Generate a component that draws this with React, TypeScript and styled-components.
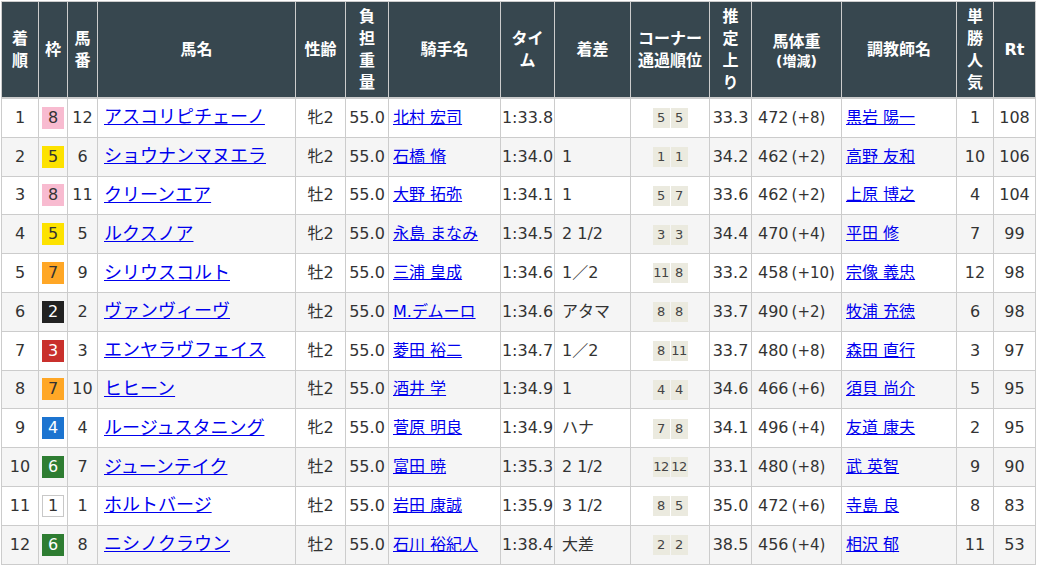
import React from "react";
import styled, { createGlobalStyle, css } from "styled-components";

const GlobalStyle = createGlobalStyle`
  html, body { margin: 0; padding: 0; background: #fff; }
  body {
    font-family: "DejaVu Sans", "Noto Sans CJK JP", sans-serif;
    color: #333;
  }
`;

const Wrapper = styled.div`
  padding: 1px 0 0 1px;
`;

const Table = styled.table`
  border-collapse: collapse;
  table-layout: fixed;
  width: 1035px;
  font-size: 16px;
  border: 1px solid #ccc;
`;

const HeadCell = styled.th`
  background: #37474f;
  color: #fff;
  font-weight: bold;
  font-size: 16px;
  line-height: 22px;
  height: 95px;
  padding: 0;
  text-align: center;
  vertical-align: middle;
  border: 1px solid #ccc;
  border-bottom: 2px solid #ccc;
`;

const SmallHead = styled.span`
  display: block;
  font-size: 14px;
  line-height: 16px;
`;

const Row = styled.tr<{ $alt: boolean }>`
  background: ${(p) => (p.$alt ? "#f5f5f5" : "#fff")};
`;

type Align = "left" | "center";

const Cell = styled.td<{ $align?: Align; $pl?: number }>`
  height: 37.8px;
  padding: 0 ${(p) => (p.$align === "left" ? "2px" : "0")} 0
    ${(p) => (p.$align === "left" ? `${p.$pl ?? 4}px` : "0")};
  text-align: ${(p) => p.$align ?? "center"};
  vertical-align: middle;
  border: 1px solid #ccc;
  line-height: 20px;
  white-space: nowrap;
  overflow: hidden;
`;

const Link = styled.a<{ $big?: boolean }>`
  color: #0000ee;
  text-decoration: underline;
  ${(p) =>
    p.$big &&
    css`
      font-size: 18px;
    `}
`;

const frameColors: Record<number, { bg: string; fg: string; border?: string }> = {
  1: { bg: "#ffffff", fg: "#333", border: "#c8c8c8" },
  2: { bg: "#222222", fg: "#fff" },
  3: { bg: "#c9302c", fg: "#fff" },
  4: { bg: "#1c74d0", fg: "#fff" },
  5: { bg: "#fde200", fg: "#333" },
  6: { bg: "#2e7d32", fg: "#fff" },
  7: { bg: "#ffa726", fg: "#333" },
  8: { bg: "#f8bbd0", fg: "#333" },
};

const Frame = styled.span<{ $n: number }>`
  display: inline-block;
  box-sizing: border-box;
  width: 22px;
  height: 22px;
  line-height: 22px;
  font-size: 16px;
  text-align: center;
  vertical-align: middle;
  background: ${(p) => frameColors[p.$n].bg};
  color: ${(p) => frameColors[p.$n].fg};
  ${(p) =>
    frameColors[p.$n].border &&
    css`
      border: 1px solid ${frameColors[p.$n].border};
      line-height: 20px;
    `}
`;

const Corners = styled.span`
  display: inline-flex;
  gap: 1px;
  vertical-align: middle;
`;

const CornerBox = styled.span`
  display: inline-block;
  width: 17px;
  height: 20px;
  line-height: 20px;
  font-size: 13px;
  letter-spacing: -0.5px;
  text-align: center;
  background: #ebeadf;
  color: #444;
`;

const Diff = styled.span`
  font-size: 15px;
  margin-left: 3px;
`;

type Data = {
  pos: number;
  frame: number;
  num: number;
  horse: string;
  sex: string;
  weight: string;
  jockey: string;
  time: string;
  margin: string;
  corners: number[];
  last3f: string;
  body: number;
  diff: string;
  trainer: string;
  pop: number;
  rt: number;
};

const rows: Data[] = [
  { pos: 1, frame: 8, num: 12, horse: "アスコリピチェーノ", sex: "牝2", weight: "55.0", jockey: "北村 宏司", time: "1:33.8", margin: "", corners: [5, 5], last3f: "33.3", body: 472, diff: "+8", trainer: "黒岩 陽一", pop: 1, rt: 108 },
  { pos: 2, frame: 5, num: 6, horse: "ショウナンマヌエラ", sex: "牝2", weight: "55.0", jockey: "石橋 脩", time: "1:34.0", margin: "1", corners: [1, 1], last3f: "34.2", body: 462, diff: "+2", trainer: "高野 友和", pop: 10, rt: 106 },
  { pos: 3, frame: 8, num: 11, horse: "クリーンエア", sex: "牡2", weight: "55.0", jockey: "大野 拓弥", time: "1:34.1", margin: "1", corners: [5, 7], last3f: "33.6", body: 462, diff: "+2", trainer: "上原 博之", pop: 4, rt: 104 },
  { pos: 4, frame: 5, num: 5, horse: "ルクスノア", sex: "牝2", weight: "55.0", jockey: "永島 まなみ", time: "1:34.5", margin: "2 1/2", corners: [3, 3], last3f: "34.4", body: 470, diff: "+4", trainer: "平田 修", pop: 7, rt: 99 },
  { pos: 5, frame: 7, num: 9, horse: "シリウスコルト", sex: "牡2", weight: "55.0", jockey: "三浦 皇成", time: "1:34.6", margin: "1／2", corners: [11, 8], last3f: "33.2", body: 458, diff: "+10", trainer: "宗像 義忠", pop: 12, rt: 98 },
  { pos: 6, frame: 2, num: 2, horse: "ヴァンヴィーヴ", sex: "牡2", weight: "55.0", jockey: "M.デムーロ", time: "1:34.6", margin: "アタマ", corners: [8, 8], last3f: "33.7", body: 490, diff: "+2", trainer: "牧浦 充徳", pop: 6, rt: 98 },
  { pos: 7, frame: 3, num: 3, horse: "エンヤラヴフェイス", sex: "牡2", weight: "55.0", jockey: "菱田 裕二", time: "1:34.7", margin: "1／2", corners: [8, 11], last3f: "33.7", body: 480, diff: "+8", trainer: "森田 直行", pop: 3, rt: 97 },
  { pos: 8, frame: 7, num: 10, horse: "ヒヒーン", sex: "牡2", weight: "55.0", jockey: "酒井 学", time: "1:34.9", margin: "1", corners: [4, 4], last3f: "34.6", body: 466, diff: "+6", trainer: "須貝 尚介", pop: 5, rt: 95 },
  { pos: 9, frame: 4, num: 4, horse: "ルージュスタニング", sex: "牝2", weight: "55.0", jockey: "菅原 明良", time: "1:34.9", margin: "ハナ", corners: [7, 8], last3f: "34.1", body: 496, diff: "+4", trainer: "友道 康夫", pop: 2, rt: 95 },
  { pos: 10, frame: 6, num: 7, horse: "ジューンテイク", sex: "牡2", weight: "55.0", jockey: "富田 暁", time: "1:35.3", margin: "2 1/2", corners: [12, 12], last3f: "33.1", body: 480, diff: "+8", trainer: "武 英智", pop: 9, rt: 90 },
  { pos: 11, frame: 1, num: 1, horse: "ホルトバージ", sex: "牡2", weight: "55.0", jockey: "岩田 康誠", time: "1:35.9", margin: "3 1/2", corners: [8, 5], last3f: "35.0", body: 472, diff: "+6", trainer: "寺島 良", pop: 8, rt: 83 },
  { pos: 12, frame: 6, num: 8, horse: "ニシノクラウン", sex: "牡2", weight: "55.0", jockey: "石川 裕紀人", time: "1:38.4", margin: "大差", corners: [2, 2], last3f: "38.5", body: 456, diff: "+4", trainer: "相沢 郁", pop: 11, rt: 53 },
];

const widths = [37, 29, 30, 198, 50, 43, 112, 54, 76, 79, 42, 90, 115, 37, 42];

export default function App() {
  return (
    <>
      <GlobalStyle />
      <Wrapper>
        <Table>
          <colgroup>
            {widths.map((w, i) => (
              <col key={i} style={{ width: w }} />
            ))}
          </colgroup>
          <thead>
            <tr>
              <HeadCell>着<br />順</HeadCell>
              <HeadCell>枠</HeadCell>
              <HeadCell>馬<br />番</HeadCell>
              <HeadCell>馬名</HeadCell>
              <HeadCell>性齢</HeadCell>
              <HeadCell>負<br />担<br />重<br />量</HeadCell>
              <HeadCell>騎手名</HeadCell>
              <HeadCell>タイ<br />ム</HeadCell>
              <HeadCell>着差</HeadCell>
              <HeadCell>コーナー<br />通過順位</HeadCell>
              <HeadCell>推<br />定<br />上<br />り</HeadCell>
              <HeadCell>
                馬体重
                <SmallHead>(増減)</SmallHead>
              </HeadCell>
              <HeadCell>調教師名</HeadCell>
              <HeadCell>単<br />勝<br />人<br />気</HeadCell>
              <HeadCell>Rt</HeadCell>
            </tr>
          </thead>
          <tbody>
            {rows.map((r, i) => (
              <Row key={r.pos} $alt={i % 2 === 1}>
                <Cell>{r.pos}</Cell>
                <Cell>
                  <Frame $n={r.frame}>{r.frame}</Frame>
                </Cell>
                <Cell>{r.num}</Cell>
                <Cell $align="left" $pl={6}>
                  <Link $big href="#">{r.horse}</Link>
                </Cell>
                <Cell>{r.sex}</Cell>
                <Cell>{r.weight}</Cell>
                <Cell $align="left" $pl={4}>
                  <Link href="#">{r.jockey}</Link>
                </Cell>
                <Cell>{r.time}</Cell>
                <Cell $align="left" $pl={7}>{r.margin}</Cell>
                <Cell>
                  <Corners>
                    {r.corners.map((c, j) => (
                      <CornerBox key={j}>{c}</CornerBox>
                    ))}
                  </Corners>
                </Cell>
                <Cell>{r.last3f}</Cell>
                <Cell $align="left" $pl={6}>
                  {r.body}
                  <Diff>({r.diff})</Diff>
                </Cell>
                <Cell $align="left" $pl={4}>
                  <Link href="#">{r.trainer}</Link>
                </Cell>
                <Cell>{r.pop}</Cell>
                <Cell>{r.rt}</Cell>
              </Row>
            ))}
          </tbody>
        </Table>
      </Wrapper>
    </>
  );
}
